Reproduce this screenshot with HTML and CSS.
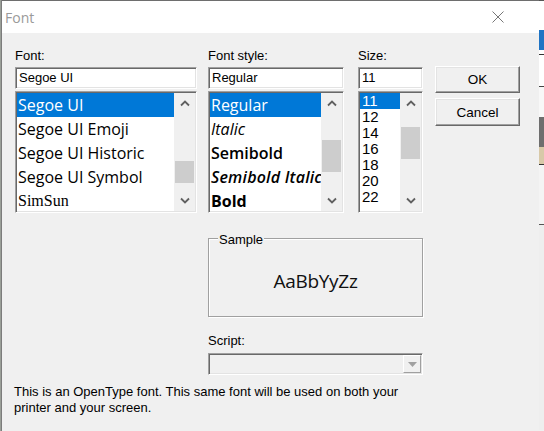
FILE: index.html
```html
<!DOCTYPE html>
<html>
<head>
<meta charset="utf-8">
<link rel="stylesheet" href="styles.css">
</head>
<body>
<div class="edge-left"></div>
<div class="dialog">
  <div class="titlebar">
    <span class="title">Font</span>
    <svg class="close" width="12" height="12" viewBox="0 0 12 12"><path d="M0.5 0.5 L11.5 11.5 M11.5 0.5 L0.5 11.5" stroke="#777" stroke-width="1" fill="none"/></svg>
  </div>
  <div class="content">
    <div class="top">
      <div class="col col-font">
        <div class="label">Font:</div>
        <div class="field">Segoe UI</div>
        <div class="list">
          <div class="items">
            <div class="item sel">Segoe UI</div>
            <div class="item">Segoe UI Emoji</div>
            <div class="item">Segoe UI Historic</div>
            <div class="item">Segoe UI Symbol</div>
            <div class="item simsun">SimSun</div>
          </div>
          <div class="sb">
            <div class="sb-btn"><svg width="10" height="7" viewBox="0 0 10 7"><polyline points="1,5.5 5,1.5 9,5.5" fill="none" stroke="#606060" stroke-width="1.8"/></svg></div>
            <div class="sb-track"><div class="thumb thumb-font"></div></div>
            <div class="sb-btn"><svg width="10" height="7" viewBox="0 0 10 7"><polyline points="1,1.5 5,5.5 9,1.5" fill="none" stroke="#606060" stroke-width="1.8"/></svg></div>
          </div>
        </div>
      </div>
      <div class="col col-style">
        <div class="label">Font style:</div>
        <div class="field">Regular</div>
        <div class="list">
          <div class="items">
            <div class="item sel">Regular</div>
            <div class="item italic">Italic</div>
            <div class="item semibold">Semibold</div>
            <div class="item semibold italic wide">Semibold Italic</div>
            <div class="item bold">Bold</div>
          </div>
          <div class="sb">
            <div class="sb-btn"><svg width="10" height="7" viewBox="0 0 10 7"><polyline points="1,5.5 5,1.5 9,5.5" fill="none" stroke="#606060" stroke-width="1.8"/></svg></div>
            <div class="sb-track"><div class="thumb thumb-style"></div></div>
            <div class="sb-btn"><svg width="10" height="7" viewBox="0 0 10 7"><polyline points="1,1.5 5,5.5 9,1.5" fill="none" stroke="#606060" stroke-width="1.8"/></svg></div>
          </div>
        </div>
      </div>
      <div class="col col-size">
        <div class="label">Size:</div>
        <div class="field">11</div>
        <div class="list">
          <div class="items">
            <div class="num sel">11</div>
            <div class="num">12</div>
            <div class="num">14</div>
            <div class="num">16</div>
            <div class="num">18</div>
            <div class="num">20</div>
            <div class="num">22</div>
          </div>
          <div class="sb">
            <div class="sb-btn"><svg width="10" height="7" viewBox="0 0 10 7"><polyline points="1,5.5 5,1.5 9,5.5" fill="none" stroke="#606060" stroke-width="1.8"/></svg></div>
            <div class="sb-track"><div class="thumb thumb-size"></div></div>
            <div class="sb-btn"><svg width="10" height="7" viewBox="0 0 10 7"><polyline points="1,1.5 5,5.5 9,1.5" fill="none" stroke="#606060" stroke-width="1.8"/></svg></div>
          </div>
        </div>
      </div>
      <div class="buttons">
        <div class="btn btn-ok">OK</div>
        <div class="btn btn-cancel">Cancel</div>
      </div>
    </div>
    <div class="lower">
      <div class="sample">
        <span class="sample-label">Sample</span>
        <span class="sample-text">AaBbYyZz</span>
      </div>
      <div class="label script-label">Script:</div>
      <div class="combo">
        <div class="combo-btn"><svg width="9" height="5" viewBox="0 0 9 5"><polygon points="0,0 9,0 4.5,5" fill="#a0a0a0"/></svg></div>
      </div>
    </div>
    <p class="info">This is an OpenType font. This same font will be used on both your printer and your screen.</p>
  </div>
</div>
<div class="edge-right">
  <div class="er er1"></div>
  <div class="er er2"></div>
  <div class="er er3"></div>
  <div class="er er4"></div>
  <div class="er er5"></div>
  <div class="er er6"></div>
  <div class="er er7"></div>
  <div class="er er8"></div>
  <div class="er er9"></div>
  <div class="er er10"></div>
</div>
</body>
</html>
```
FILE: styles.css
```css
* { box-sizing: border-box; }
html, body { margin: 0; padding: 0; }
body {
  width: 544px;
  height: 431px;
  overflow: hidden;
  display: flex;
  background: #8c8c8c;
  font-family: "Liberation Sans", Arial, sans-serif;
  font-size: 13px;
  color: #000;
}
.edge-left { width: 2px; background: #9a9f98; border-right: 1px solid #7c7c7c; }
.dialog {
  width: 537px;
  height: 431px;
  background: #f0f0f0;
  border-top: 1px solid #6e6e6e;
  display: flex;
  flex-direction: column;
}
.titlebar {
  height: 32px;
  flex: none;
  background: #fff;
  display: flex;
  align-items: center;
  justify-content: space-between;
  padding: 0 35px 0 3px;
}
.title { font-family: "Open Sans", sans-serif; font-size: 14px; color: #9a9a9a; }
.close { display: block; }
.content { padding: 13px 0 0 13px; }
.top { display: flex; align-items: flex-start; }
.col { display: flex; flex-direction: column; }
.col-font { width: 182px; margin-right: 11px; }
.col-style { width: 136px; margin-right: 14px; }
.col-size { width: 65px; margin-right: 12px; }
.label { height: 20px; line-height: 20px; white-space: nowrap; }
.field {
  height: 22px;
  margin-top: 1px;
  background: #fff;
  border: 1px solid;
  border-color: #a0a0a0 #fff #fff #a0a0a0;
  box-shadow: inset 1px 1px 0 #696969, inset -1px -1px 0 #e3e3e3;
  padding-left: 3px;
  line-height: 20px;
  white-space: nowrap;
}
.list {
  height: 122px;
  margin-top: 2px;
  background: #fff;
  border: 1px solid;
  border-color: #a0a0a0 #fff #fff #a0a0a0;
  box-shadow: inset 1px 1px 0 #696969, inset -1px -1px 0 #e3e3e3;
  padding: 1px;
  display: flex;
  overflow: hidden;
}
.items { flex: 1; overflow: hidden; min-width: 0; }
.item {
  height: 24px;
  line-height: 24px;
  padding-left: 1px;
  font-family: "Open Sans", sans-serif;
  font-size: 16px;
  white-space: nowrap;
  overflow: hidden;
}
.item.sel, .num.sel { background: #0078d7; color: #fff; }
.italic { font-style: italic; }
.semibold { font-weight: 600; }
.bold { font-weight: 700; }
.wide { letter-spacing: 0.2px; }
.simsun { font-family: "Liberation Serif", serif; font-size: 16px; }
.num {
  height: 16px;
  line-height: 16px;
  padding-left: 2px;
  font-size: 15px;
}
.sb {
  width: 21px;
  flex: none;
  background: #f0f0f0;
  display: flex;
  flex-direction: column;
}
.sb-btn { height: 21px; display: flex; align-items: center; justify-content: center; }
.sb-btn svg { display: block; }
.sb-track { flex: 1; padding-left: 1px; }
.thumb { background: #cdcdcd; width: 19px; }
.thumb-font { margin-top: 47px; height: 22px; }
.thumb-style { margin-top: 26px; height: 32px; }
.thumb-size { margin-top: 13px; height: 32px; }
.buttons { width: 85px; display: flex; flex-direction: column; gap: 5px; padding-top: 20px; }
.btn {
  height: 27px;
  background: #f0f0f0;
  border: 1px solid;
  border-color: #fff #696969 #696969 #fff;
  box-shadow: inset -1px -1px 0 #a0a0a0, inset 1px 1px 0 #e3e3e3;
  display: flex;
  align-items: center;
  justify-content: center;
  font-size: 13.5px;
}
.btn-cancel { height: 28px; }
.lower { margin-left: 193px; margin-top: 25px; width: 215px; }
.sample {
  position: relative;
  height: 79px;
  border: 1px solid #a0a0a0;
  box-shadow: inset 1px 1px 0 #fff, 1px 1px 0 #fff;
  display: flex;
  align-items: center;
  justify-content: center;
  padding-top: 7px;
}
.sample-label {
  position: absolute;
  top: -7px;
  left: 9px;
  padding: 0 1px;
  background: #f0f0f0;
  line-height: 15px;
}
.sample-text { font-family: "Open Sans", sans-serif; font-size: 19px; letter-spacing: -0.3px; color: #111; }
.script-label { margin-top: 14px; }
.combo {
  height: 22px;
  margin-top: 2px;
  background: #f0f0f0;
  border: 1px solid;
  border-color: #a0a0a0 #fff #fff #a0a0a0;
  box-shadow: inset 1px 1px 0 #696969, inset -1px -1px 0 #e3e3e3;
  padding: 1px;
  display: flex;
  justify-content: flex-end;
}
.combo-btn {
  width: 18px;
  height: 18px;
  border: 1px solid;
  border-color: #fff #a0a0a0 #a0a0a0 #fff;
  display: flex;
  align-items: center;
  justify-content: center;
}
.combo-btn svg { display: block; }
.info { margin: 9px 0 0 -1px; width: 400px; line-height: 16px; }
.edge-right { width: 5px; display: flex; flex-direction: column; background: #f0f0f0; }
.er { flex: none; }
.er1 { height: 12px; background: #fff; border-top: 1px solid #555; }
.er2 { height: 18px; background: #fff; }
.er3 { height: 20px; background: #1f74c4; }
.er4 { height: 5px; background: #fff; border-bottom: 1px solid #333; }
.er5 { height: 32px; background: #fff; border-bottom: 1px solid #444; }
.er6 { height: 30px; background: #f8f8f8; }
.er7 { height: 30px; background: #6e6e6e; }
.er8 { height: 18px; background: #d8c9a8; border-bottom: 1px solid #333; }
.er9 { height: 60px; background: #f4f4f4; border-bottom: 1px solid #555; }
.er10 { height: 205px; background: #eeeeee; }
```
